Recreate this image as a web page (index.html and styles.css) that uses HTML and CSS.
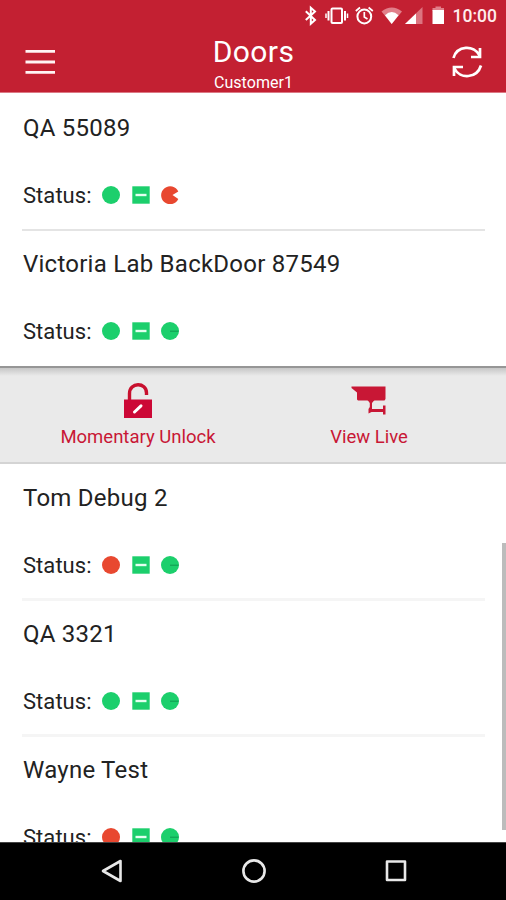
FILE: index.html
```html
<!DOCTYPE html>
<html lang="en">
<head>
<meta charset="utf-8">
<title>Doors</title>
<link rel="stylesheet" href="styles.css">
</head>
<body>
<svg class="defs" aria-hidden="true">
  <symbol id="ok" viewBox="0 0 18 18"><circle cx="9" cy="9" r="9"/></symbol>
  <symbol id="bar" viewBox="0 0 18 18"><path d="M0.3 0.3H17.7V17.7H0.3z"/><path d="M3.5 9H14.5" stroke="#e4fff0" stroke-width="2.4"/></symbol>
  <symbol id="dial" viewBox="0 0 18 18"><circle cx="9" cy="9" r="9"/><path d="M9 9.2H17.5" stroke="#119950" stroke-width="1"/></symbol>
  <symbol id="open" viewBox="0 0 18 18"><path d="M17.3 5.5L11.5 9L17.3 13A9 9 0 1 1 17.3 5.5z"/></symbol>
</svg>
<div class="phone">
  <header class="header">
    <div class="statusbar">
      <svg width="200" height="30" viewBox="306 0 200 30" fill="none" stroke="#fff">
        <path d="M305.800 11.500L315 20.200L310.800 24V8L315 11.800L305.800 20.400" stroke-width="2" transform="translate(0 -.3)"/>
        <rect x="331.500" y="8.500" width="10.500" height="14.500" rx="1" stroke-width="2"/>
        <path d="M328.500 11V20.500M345 11V20.500" stroke-width="2"/>
        <path d="M326 13.500V18M347.500 13.500V18" stroke-width="1.500"/>
        <circle cx="364.300" cy="16.500" r="6.900" stroke-width="2"/>
        <path d="M364.300 12V17L367.500 19M355.800 11L360 7.500M368.600 7.500L372.800 11" stroke-width="1.700"/>
        <path d="M381.500 11.500Q391.700 3.500 402 11.500L391.700 24z" fill="#e17f8a" stroke="none"/>
        <path d="M385 15.300Q391.700 8.500 398.500 15.300L391.700 24z" fill="#fff" stroke="none"/>
        <path d="M422.500 7V24H405z" fill="#dc7480" stroke="none"/>
        <path d="M416 13.500V24H405z" fill="#fff" stroke="none"/>
        <path d="M435.500 6.500H441V8H444V11H432.500V8H435.500z" fill="#e17f8a" stroke="none"/>
        <path d="M432.500 10H444V24H432.500z" fill="#fff" stroke="none"/>
      </svg>
      <span class="clock">10:00</span>
    </div>
    <div class="appbar">
      <svg class="menu" width="30" height="26" viewBox="0 0 30 26" stroke="#fff4f4" stroke-width="2.800"><path d="M.5 2.400H30M.5 13H30M.5 23.400H30"/></svg>
      <div class="heading">
        <h1>Doors</h1>
        <p>Customer1</p>
      </div>
      <svg class="refresh" width="32" height="34" viewBox="0 0 32 34" fill="none" stroke="#fff" stroke-width="2.700"><path d="M2.500 13C6 .5 23 -.5 28.500 10.500M29 3V12H20M30 20.500C26 33.500 9 34.500 3.500 23.500M3 31V22H12"/></svg>
    </div>
  </header>

  <main class="list">
    <section class="door">
      <h2>QA 55089</h2>
      <div class="status"><span>Status:</span><svg class="good"><use href="#ok"/></svg><svg class="good"><use href="#bar"/></svg><svg class="bad"><use href="#open"/></svg></div>
    </section>
    <section class="door selected">
      <h2>Victoria Lab BackDoor 87549</h2>
      <div class="status"><span>Status:</span><svg class="good"><use href="#ok"/></svg><svg class="good"><use href="#bar"/></svg><svg class="good"><use href="#dial"/></svg></div>
    </section>
    <div class="actions">
      <div class="action unlock">
        <svg width="28" height="36" viewBox="0 0 28 36"><path d="M5.500 18V10.500C5.500 -1 22.500 -1 22.500 10V12" fill="none" stroke="#c8102e" stroke-width="3.400"/><path d="M0 16.500H28V35H0z" fill="#cc0836"/><path d="M10.500 29L17 22.800" stroke="#fff" stroke-width="3" stroke-linecap="round"/></svg>
        <span>Momentary Unlock</span>
      </div>
      <div class="action live">
        <svg width="36" height="36" viewBox="0 0 36 36"><path d="M.5 3.500H34.500V16L33.500 17.500H7L6 16.500V9.500L.5 5z" fill="#c81735"/><path d="M16.500 17H23.500L21 20V26H32V22.500H34.500V31.500H32V29H20.500L17.500 30.500V26L18.800 24V20z" fill="#c81735"/></svg>
        <span>View Live</span>
      </div>
    </div>
    <section class="door pale">
      <h2>Tom Debug 2</h2>
      <div class="status"><span>Status:</span><svg class="bad"><use href="#ok"/></svg><svg class="good"><use href="#bar"/></svg><svg class="good"><use href="#dial"/></svg></div>
    </section>
    <section class="door pale">
      <h2>QA 3321</h2>
      <div class="status"><span>Status:</span><svg class="good"><use href="#ok"/></svg><svg class="good"><use href="#bar"/></svg><svg class="good"><use href="#dial"/></svg></div>
    </section>
    <section class="door">
      <h2>Wayne Test</h2>
      <div class="status"><span>Status:</span><svg class="bad"><use href="#ok"/></svg><svg class="good"><use href="#bar"/></svg><svg class="good"><use href="#dial"/></svg></div>
    </section>
    <div class="scrollbar"></div>
  </main>

  <nav class="navbar">
    <svg width="24" height="26" viewBox="0 0 24 26"><path d="M3 13L20.500 3V23z"/></svg>
    <svg width="26" height="26" viewBox="0 0 26 26"><circle cx="13" cy="13" r="10.600"/></svg>
    <svg width="24" height="26" viewBox="0 0 24 26"><rect x="3" y="3.500" width="18" height="18.500"/></svg>
  </nav>
</div>
</body>
</html>
```

FILE: styles.css
```css
* { box-sizing: border-box; }
body, h1, h2, p { margin: 0; }
body { font-family: Roboto, sans-serif; background: #fff; }
h1, h2 { font-weight: 400; }
svg { display: block; flex: none; }
.defs { position: absolute; width: 0; height: 0; }
.phone { display: flex; flex-direction: column; width: 506px; height: 900px; overflow: hidden; }

.header { height: 93px; flex: none; background: #c32032; border-bottom: 1px solid #dc7984; color: #fff; }
.statusbar { height: 32px; display: grid; }
.statusbar svg { grid-area: 1 / 1; justify-self: end; overflow: visible; }
.clock { grid-area: 1 / 1; justify-self: end; margin-right: 9px; font-size: 17.500px; line-height: 32px; font-weight: 500; color: #ffecec; }
.appbar { display: grid; grid-template-columns: 86px 1fr 85px; height: 60px; }
.menu { margin: 17px 0 0 25px; }
.heading { text-align: center; }
.heading h1 { font-size: 30px; line-height: 36px; margin-top: 2px; letter-spacing: .4px; }
.heading p { font-size: 16px; line-height: 20px; margin-top: 3px; letter-spacing: .05px; }
.refresh { margin: 13px 0 0 30px; }

.list { position: relative; flex: 1; overflow: hidden; padding-top: 1px; color: #222; }
.door { height: 136px; margin: 0 21px 0 22px; padding: 18px 0 0 1px; border-bottom: 2px solid #e4e4e4; }
.door:first-child { height: 137px; }
.door:first-child + .door { height: 135px; padding-top: 17px; }
.door.pale { height: 137px; border-bottom: 3px solid #f5f5f5; }
.door.pale + .door { padding-top: 17px; height: 136px; }
.door.selected { border-bottom: 0; }
.door h2 { font-size: 24px; line-height: 32px; letter-spacing: .25px; }
.status { display: flex; align-items: center; margin-top: 35px; height: 32px; font-size: 22px; letter-spacing: .05px; }
.status span { width: 79px; }
.status svg { width: 18px; height: 18px; margin-right: 11.500px; }
.good { fill: #1ccf6c; }
.bad { fill: #e84830; }

.actions { display: flex; height: 98px; background: linear-gradient(#c6c6c6, #eaeaea 8px); border-top: 2px solid #969696; border-bottom: 2px solid #d4d4d4; color: #c81735; }
.action { display: flex; flex-direction: column; align-items: center; padding-top: 15px; font-size: 18.500px; line-height: 24px; }
.action span { margin-top: 6px; white-space: nowrap; }
.unlock { width: 276px; }
.live { width: 186px; }

.scrollbar { position: absolute; right: 0; top: 450px; width: 4px; height: 287px; background: #bcbcbc; }
.navbar { display: flex; flex: none; height: 58px; background: #000; border-top: 1px solid #444; padding: 15px 98px 0 100px; justify-content: space-between; }
.navbar svg { fill: none; stroke: #e8e8e8; stroke-width: 2.600; stroke-linejoin: round; }
```
